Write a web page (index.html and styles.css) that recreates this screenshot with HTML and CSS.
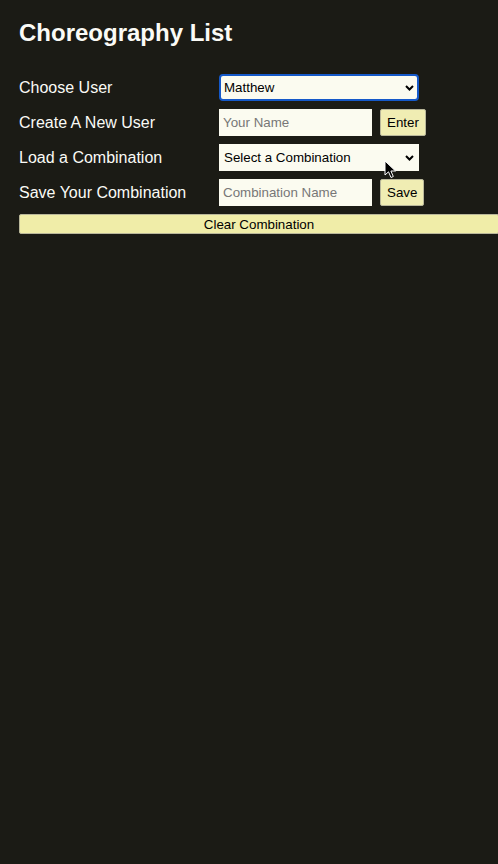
FILE: index.html
```html
<!DOCTYPE html>
<html lang="en">
<head>
<meta charset="utf-8">
<title>Choreography List</title>
<link rel="stylesheet" href="styles.css">
</head>
<body>
<div class="app">
  <h2 class="title">Choreography List</h2>
  <div class="form">
    <label class="label">Choose User</label>
    <div class="ctrl">
      <div class="select-wrap">
        <select class="select focused"><option>Matthew</option></select>
        <svg class="chev" width="9" height="6" viewBox="0 0 9 6"><path d="M1 1 L4.5 4.5 L8 1" fill="none" stroke="#000" stroke-width="2"/></svg>
      </div>
    </div>

    <label class="label">Create A New User</label>
    <div class="ctrl">
      <input class="field" type="text" placeholder="Your Name">
      <button class="btn">Enter</button>
    </div>

    <label class="label">Load a Combination</label>
    <div class="ctrl">
      <div class="select-wrap">
        <select class="select"><option>Select a Combination</option></select>
        <svg class="chev" width="9" height="6" viewBox="0 0 9 6"><path d="M1 1 L4.5 4.5 L8 1" fill="none" stroke="#000" stroke-width="2"/></svg>
        <svg class="cursor" width="13" height="19" viewBox="0 0 13 19"><path d="M1 1 L1 15 L4.5 11.8 L7 17.5 L9.3 16.5 L6.9 11 L11.5 11 Z" fill="#000" stroke="#fff" stroke-width="1" stroke-linejoin="round"/></svg>
      </div>
    </div>

    <label class="label">Save Your Combination</label>
    <div class="ctrl">
      <input class="field" type="text" placeholder="Combination Name">
      <button class="btn">Save</button>
    </div>
  </div>
  <button class="clear">Clear Combination</button>
</div>
</body>
</html>
```

FILE: styles.css
```css
html {
  overflow: hidden;
  background: #1b1b15;
}
body {
  margin: 0;
  background: #1b1b15;
  color: #fafaf5;
  font-family: "Liberation Sans", Arial, sans-serif;
}
.app {
  padding: 19px 0 0 19px;
}
.title {
  margin: 0 0 27px 0;
  font-size: 24px;
  font-weight: bold;
  line-height: 28px;
  color: #fbfbf6;
}
.form {
  display: grid;
  grid-template-columns: 200px auto;
  row-gap: 8px;
}
.label {
  font-size: 16px;
  height: 27px;
  display: flex;
  align-items: center;
}
.ctrl {
  display: flex;
  align-items: center;
  gap: 8px;
  height: 27px;
}
.select-wrap {
  position: relative;
  width: 200px;
  height: 27px;
}
.select {
  appearance: none;
  -webkit-appearance: none;
  width: 200px;
  height: 27px;
  box-sizing: border-box;
  margin: 0;
  border: 1px solid #fbfbf0;
  border-radius: 0;
  background: #fbfbf0;
  font-family: "Liberation Sans", Arial, sans-serif;
  font-size: 13.33px;
  color: #000;
  padding: 0 0 0 4px;
}
.select.focused {
  border: 2px solid #1559c9;
  border-radius: 4px;
  padding-left: 3px;
}
.chev {
  position: absolute;
  right: 5px;
  top: 11px;
  pointer-events: none;
}
.cursor {
  position: absolute;
  left: 165px;
  top: 16px;
}
.field {
  width: 153px;
  height: 27px;
  box-sizing: border-box;
  margin: 0;
  border: 1px solid #fbfbf0;
  background: #fbfbf0;
  padding: 0 3px;
  font-family: "Liberation Sans", Arial, sans-serif;
  font-size: 13.33px;
  color: #000;
  outline: none;
}
.field::placeholder {
  color: #777777;
}
.btn {
  height: 27px;
  box-sizing: border-box;
  margin: 0;
  padding: 0 6px;
  border: 1px solid #b9b79a;
  border-radius: 2px;
  background: #f0edb3;
  font-family: "Liberation Sans", Arial, sans-serif;
  font-size: 13.33px;
  color: #000;
}
.clear {
  display: block;
  margin-top: 8px;
  width: 480px;
  height: 20px;
  box-sizing: border-box;
  padding: 0;
  border: 1px solid #b9b79a;
  border-radius: 2px;
  background: #f0eda8;
  font-family: "Liberation Sans", Arial, sans-serif;
  font-size: 13.33px;
  color: #000;
}
```
